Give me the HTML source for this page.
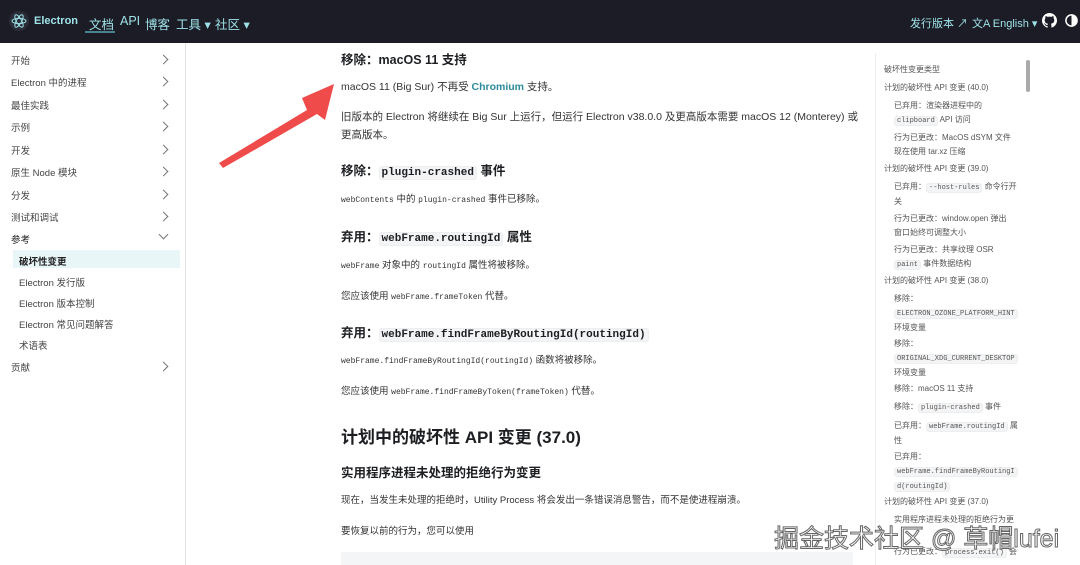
<!DOCTYPE html><html><head><meta charset="utf-8"><style>
*{margin:0;padding:0;box-sizing:border-box}
body{width:1080px;height:565px;overflow:hidden;background:#fff;font-family:"Liberation Sans","Noto Sans CJK SC",sans-serif;color:#1c1e21;position:relative}
.nav{position:absolute;left:0;top:0;width:1080px;height:43px;background:#1b1c26;color:#9fe3e8;font-size:12.5px}
.nav span{position:absolute;top:14px;white-space:nowrap}
.a{position:absolute;white-space:nowrap}
code{font-family:"Liberation Mono",monospace;background:#f3f4f6;border:1px solid #eee;border-radius:3px;padding:0 2px}
.side{position:absolute;left:0;top:43px;width:186px;height:522px;border-right:1px solid #e3e3e3}
.si{position:absolute;left:11px;font-size:9.5px;color:#444}
.chev{position:absolute;left:160px;width:7px;height:7px;border-right:1.5px solid #777;border-top:1.5px solid #777;transform:rotate(45deg)}
.c{font-size:10.5px;color:#333}
.h3{font-size:12.5px;font-weight:bold;color:#1c1e21}
.t{position:absolute;font-size:8px;color:#555;line-height:14px}
.t code{font-size:7px}
</style></head><body>
<div class="nav">
<svg style="position:absolute;left:9px;top:11px" width="20" height="20" viewBox="0 0 20 20"><circle cx="10" cy="10" r="10" fill="#2a2c38"/><g fill="none" stroke="#9fe3e8" stroke-width="1"><ellipse cx="10" cy="10" rx="7" ry="2.6"/><ellipse cx="10" cy="10" rx="7" ry="2.6" transform="rotate(60 10 10)"/><ellipse cx="10" cy="10" rx="7" ry="2.6" transform="rotate(-60 10 10)"/></g></svg>
<span style="left:34px;font-weight:bold;font-size:11px;top:15px">Electron</span>
<span style="left:89px">文档</span><div style="position:absolute;left:85px;top:31px;width:30px;height:2px;background:#47848f"></div>
<span style="left:120px">API</span><span style="left:145px">博客</span><span style="left:176px">工具 ▾</span><span style="left:215px">社区 ▾</span>
<span style="left:910px;font-size:11px;top:15px">发行版本 ↗</span>
<span style="left:972px;font-size:11px;top:15px">文A English ▾</span>
<svg style="position:absolute;left:1042px;top:13px" width="15" height="15" viewBox="0 0 16 16"><path fill="#fff" d="M8 0C3.6 0 0 3.6 0 8c0 3.5 2.3 6.5 5.5 7.6.4.1.5-.2.5-.4v-1.4c-2.2.5-2.7-1-2.7-1-.4-.9-.9-1.200-.9-1.2-.7-.5.1-.5.1-.5.8.1 1.2.8 1.2.8.7 1.3 1.9.9 2.3.7.1-.5.3-.9.5-1.1-1.8-.2-3.600-.9-3.6-4 0-.9.3-1.6.8-2.100-.1-.2-.4-1 .1-2.1 0 0 .7-.2 2.2.8.6-.2 1.3-.3 2-.3s1.4.1 2 .3c1.5-1 2.2-.8 2.2-.8.4 1.1.2 1.9.1 2.1.5.6.8 1.3.8 2.1 0 3.1-1.9 3.7-3.6 3.9.3.3.5.8.5 1.5v2.2c0 .2.1.5.6.4C13.7 14.5 16 11.5 16 8c0-4.4-3.6-8-8-8z"/></svg>
<svg style="position:absolute;left:1065px;top:14px" width="13" height="13" viewBox="0 0 14 14"><circle cx="7" cy="7" r="6" fill="none" stroke="#fff" stroke-width="1.6"/><path d="M7 1a6 6 0 0 1 0 12z" fill="#fff"/></svg>
</div>
<div class="side">
<div class="si" style="top:10px">开始</div><div class="chev" style="top:13px"></div>
<div class="si" style="top:32px">Electron 中的进程</div><div class="chev" style="top:35px"></div>
<div class="si" style="top:55px">最佳实践</div><div class="chev" style="top:58px"></div>
<div class="si" style="top:77px">示例</div><div class="chev" style="top:80px"></div>
<div class="si" style="top:100px">开发</div><div class="chev" style="top:103px"></div>
<div class="si" style="top:122px">原生 Node 模块</div><div class="chev" style="top:125px"></div>
<div class="si" style="top:145px">分发</div><div class="chev" style="top:148px"></div>
<div class="si" style="top:167px">测试和调试</div><div class="chev" style="top:170px"></div>
<div class="si" style="top:189px;color:#222">参考</div><div class="chev" style="top:188px;transform:rotate(135deg)"></div>
<div style="position:absolute;left:13px;top:207px;width:167px;height:18px;background:#e8f6f8"></div>
<div class="si" style="top:211px;left:19px;color:#222;font-weight:bold">破坏性变更</div>
<div class="si" style="top:232px;left:19px">Electron 发行版</div>
<div class="si" style="top:253px;left:19px">Electron 版本控制</div>
<div class="si" style="top:274px;left:19px">Electron 常见问题解答</div>
<div class="si" style="top:295px;left:19px">术语表</div>
<div class="si" style="top:317px">贡献</div><div class="chev" style="top:320px"></div>
</div>
<div class="a h3" style="left:341px;top:49px">移除：macOS 11 支持</div>
<div class="a c" style="left:341px;top:79px">macOS 11 (Big Sur) 不再受 <b style="color:#2b8a9c">Chromium</b> 支持。</div>
<div class="a c" style="left:341px;top:108px;line-height:18px">旧版本的 Electron 将继续在 Big Sur 上运行，但运行 Electron v38.0.0 及更高版本需要 macOS 12 (Monterey) 或<br>更高版本。</div>
<div class="a h3" style="left:341px;top:160px">移除：<code style="font-size:11px">plugin-crashed</code> 事件</div>
<div class="a c" style="left:341px;top:191px;font-size:9.5px"><span style="font-family:Liberation Mono;font-size:8px">webContents</span> 中的 <span style="font-family:Liberation Mono;font-size:8px">plugin-crashed</span> 事件已移除。</div>
<div class="a h3" style="left:341px;top:226px">弃用：<code style="font-size:11px">webFrame.routingId</code> 属性</div>
<div class="a c" style="left:341px;top:257px;font-size:9.5px"><span style="font-family:Liberation Mono;font-size:8px">webFrame</span> 对象中的 <span style="font-family:Liberation Mono;font-size:8px">routingId</span> 属性将被移除。</div>
<div class="a c" style="left:341px;top:288px;font-size:9.5px">您应该使用 <span style="font-family:Liberation Mono;font-size:8px">webFrame.frameToken</span> 代替。</div>
<div class="a h3" style="left:341px;top:322px">弃用：<code style="font-size:11px">webFrame.findFrameByRoutingId(routingId)</code></div>
<div class="a c" style="left:341px;top:352px;font-size:9.5px"><span style="font-family:Liberation Mono;font-size:8px">webFrame.findFrameByRoutingId(routingId)</span> 函数将被移除。</div>
<div class="a c" style="left:341px;top:383px;font-size:9.5px">您应该使用 <span style="font-family:Liberation Mono;font-size:8px">webFrame.findFrameByToken(frameToken)</span> 代替。</div>
<div class="a" style="left:341px;top:423px;font-size:17px;font-weight:bold">计划中的破坏性 API 变更 (37.0)</div>
<div class="a h3" style="left:341px;top:462px">实用程序进程未处理的拒绝行为变更</div>
<div class="a c" style="left:341px;top:492px;font-size:9.5px">现在，当发生未处理的拒绝时，Utility Process 将会发出一条错误消息警告，而不是使进程崩溃。</div>
<div class="a c" style="left:341px;top:523px;font-size:9.5px">要恢复以前的行为，您可以使用</div>
<div class="a" style="left:341px;top:552px;width:512px;height:13px;background:#f4f5f7"></div>
<svg class="a" style="left:215px;top:78px" width="125" height="92"><path d="M4 85 L92 32 L87 20 L119 6 L110 42 L102 36 L8 90Z" fill="#ef4b4b"/></svg>
<div class="a" style="left:875px;top:53px;width:1px;height:512px;background:#eee"></div>
<div class="t" style="left:884px;top:63px">破坏性变更类型</div>
<div class="t" style="left:884px;top:81px">计划的破坏性 API 变更 (40.0)</div>
<div class="t" style="left:894px;top:99px;width:120px">已弃用：渲染器进程中的<br><code>clipboard</code> API 访问</div>
<div class="t" style="left:894px;top:131px">行为已更改：MacOS dSYM 文件<br>现在使用 tar.xz 压缩</div>
<div class="t" style="left:884px;top:162px">计划的破坏性 API 变更 (39.0)</div>
<div class="t" style="left:894px;top:180px">已弃用：<code>--host-rules</code> 命令行开<br>关</div>
<div class="t" style="left:894px;top:212px">行为已更改：window.open 弹出<br>窗口始终可调整大小</div>
<div class="t" style="left:894px;top:243px">行为已更改：共享纹理 OSR<br><code>paint</code> 事件数据结构</div>
<div class="t" style="left:884px;top:274px">计划的破坏性 API 变更 (38.0)</div>
<div class="t" style="left:894px;top:292px">移除：<br><code>ELECTRON_OZONE_PLATFORM_HINT</code><br>环境变量</div>
<div class="t" style="left:894px;top:337px">移除：<br><code>ORIGINAL_XDG_CURRENT_DESKTOP</code><br>环境变量</div>
<div class="t" style="left:894px;top:382px">移除：macOS 11 支持</div>
<div class="t" style="left:894px;top:400px">移除：<code>plugin-crashed</code> 事件</div>
<div class="t" style="left:894px;top:419px">已弃用：<code>webFrame.routingId</code> 属<br>性</div>
<div class="t" style="left:894px;top:450px">已弃用：<br><code>webFrame.findFrameByRoutingI</code><br><code>d(routingId)</code></div>
<div class="t" style="left:884px;top:495px">计划的破坏性 API 变更 (37.0)</div>
<div class="t" style="left:894px;top:513px">实用程序进程未处理的拒绝行为更</div>
<div class="t" style="left:894px;top:545px">行为已更改：<code>process.exit()</code> 会</div>
<div class="a" style="left:1026px;top:60px;width:4px;height:32px;background:#aaa;border-radius:2px"></div>
<div class="a" style="left:774px;top:519px;font-size:25px;color:#fff;-webkit-text-stroke:1px #666;font-family:'Liberation Sans','Noto Sans CJK SC',sans-serif">掘金技术社区 @ 草帽lufei</div>
</body></html>
